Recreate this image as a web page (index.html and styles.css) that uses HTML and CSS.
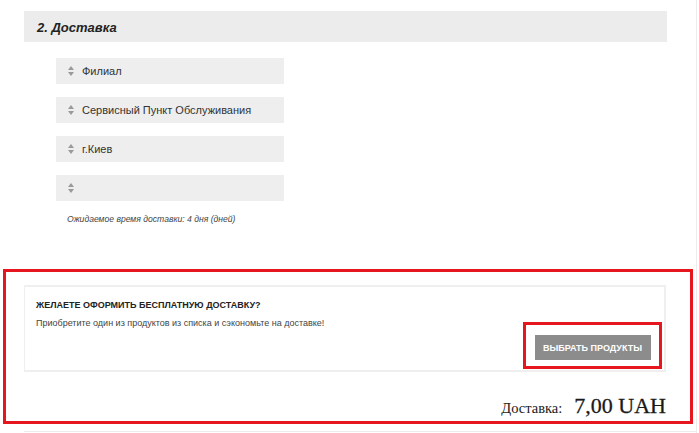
FILE: index.html
```html
<!DOCTYPE html>
<html lang="ru">
<head>
    <meta charset="UTF-8">
    <title>Доставка</title>
    <link rel="stylesheet" href="styles.css">
</head>
<body>
    <div class="page">
        <h2 class="section-title">2. Доставка</h2>

        <div class="fields">
            <div class="select">
                <svg class="arrows" width="6" height="10" viewBox="0 0 6 10"><path d="M3 0 L6 4 L0 4 Z M0 6 L6 6 L3 10 Z" fill="#9a9a9a"/></svg>
                <span>Филиал</span>
            </div>
            <div class="select">
                <svg class="arrows" width="6" height="10" viewBox="0 0 6 10"><path d="M3 0 L6 4 L0 4 Z M0 6 L6 6 L3 10 Z" fill="#9a9a9a"/></svg>
                <span>Сервисный Пункт Обслуживания</span>
            </div>
            <div class="select">
                <svg class="arrows" width="6" height="10" viewBox="0 0 6 10"><path d="M3 0 L6 4 L0 4 Z M0 6 L6 6 L3 10 Z" fill="#9a9a9a"/></svg>
                <span>г.Киев</span>
            </div>
            <div class="select">
                <svg class="arrows" width="6" height="10" viewBox="0 0 6 10"><path d="M3 0 L6 4 L0 4 Z M0 6 L6 6 L3 10 Z" fill="#9a9a9a"/></svg>
                <span></span>
            </div>
            <p class="eta">Ожидаемое время доставки: 4 дня (дней)</p>
        </div>

        <div class="offer">
            <div class="offer-panel">
                <h3 class="offer-title">ЖЕЛАЕТЕ ОФОРМИТЬ БЕСПЛАТНУЮ ДОСТАВКУ?</h3>
                <p class="offer-text">Приобретите один из продуктов из списка и сэкономьте на доставке!</p>
                <div class="offer-actions">
                    <div class="btn-frame">
                        <button class="choose-btn">ВЫБРАТЬ ПРОДУКТЫ</button>
                    </div>
                </div>
            </div>
            <div class="total">
                <span class="total-label">Доставка:</span>
                <span class="total-value">7,00 UAH</span>
            </div>
        </div>

        <div class="bottom-line"></div>
    </div>
</body>
</html>
```

FILE: styles.css
```css
body {
    margin: 0;
    background-color: #ffffff;
    font-family: "Liberation Sans", Arial, sans-serif;
    color: #333333;
}

.page {
    width: 697px;
    height: 433px;
    border-right: 1px solid #ececec;
    padding-top: 11px;
    box-sizing: border-box;
}

.section-title {
    margin: 0 29px 0 24px;
    height: 31px;
    line-height: 33px;
    padding-left: 13px;
    background-color: #ececec;
    font-size: 13px;
    font-weight: bold;
    font-style: italic;
    color: #222222;
}

.fields {
    padding-left: 56px;
    margin-top: 16px;
}

.select {
    display: flex;
    align-items: center;
    width: 228px;
    height: 26px;
    margin-bottom: 13px;
    background-color: #eeeeee;
    font-size: 11px;
    color: #333333;
}

.arrows {
    margin: 0 8px 0 12px;
}

.eta {
    margin: 2px 0 0 11px;
    font-size: 8.6px;
    font-style: italic;
    color: #444444;
}

.offer {
    margin: 45px 0 0 3px;
    width: 690px;
    height: 155px;
    border: 3px solid #e5161e;
    box-sizing: border-box;
    padding: 13px 0 0 18px;
}

.offer-panel {
    width: 642px;
    height: 87px;
    border: 2px solid #efefef;
    border-left-width: 1px;
    box-sizing: border-box;
    padding: 13px 0 0 11px;
}

.offer-title {
    margin: 0;
    font-size: 9px;
    font-weight: bold;
    color: #222222;
}

.offer-text {
    margin: 8px 0 0;
    font-size: 9px;
    color: #444444;
}

.offer-actions {
    display: flex;
    justify-content: flex-end;
    margin-top: -6px;
    padding-right: 2px;
}

.btn-frame {
    width: 139px;
    height: 47px;
    border: 3px solid #e5161e;
    box-sizing: border-box;
    display: flex;
    justify-content: center;
    padding-top: 10px;
}

.choose-btn {
    width: 116px;
    height: 25px;
    border: none;
    background-color: #8c8c8c;
    color: #ffffff;
    font-family: "Liberation Sans", Arial, sans-serif;
    font-size: 9px;
    font-weight: bold;
    padding: 0;
}

.total {
    display: flex;
    justify-content: flex-end;
    align-items: baseline;
    gap: 12px;
    width: 642px;
    margin-top: 21px;
    font-family: "Liberation Serif", "Times New Roman", serif;
    color: #1a1a1a;
}

.total-label {
    font-size: 14.5px;
}

.total-value {
    font-size: 22px;
    -webkit-text-stroke: 0.3px #1a1a1a;
}

.bottom-line {
    margin: 7px 0 0 24px;
    border-top: 1px solid #ececec;
}
```
